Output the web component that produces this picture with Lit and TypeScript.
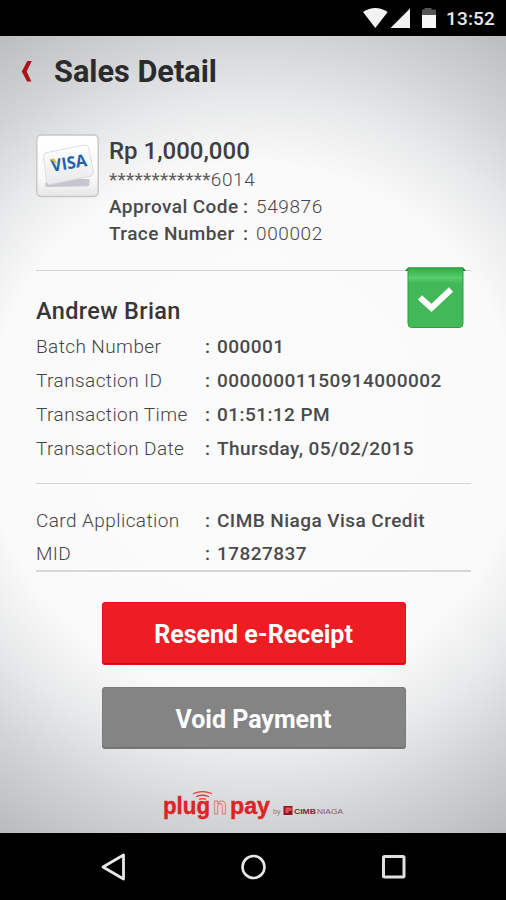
import { LitElement, html, css } from "lit";
import { customElement } from "lit/decorators.js";

const sale = [
  ["Batch Number", "000001"],
  ["Transaction ID", "00000001150914000002"],
  ["Transaction Time", "01:51:12 PM"],
  ["Transaction Date", "Thursday, 05/02/2015"],
];
const card = [
  ["Card Application", "CIMB Niaga Visa Credit"],
  ["MID", "17827837"],
];

@customElement("app-root")
export class AppRoot extends LitElement {
  static styles = css`
    :host {
      display: flex;
      flex-direction: column;
      box-sizing: border-box;
      width: 506px;
      height: 900px;
      overflow: hidden;
      font-family: Roboto, "Liberation Sans", sans-serif;
      color: #48484a;
    }
    svg { display: block; flex: none; }
    .status {
      height: 36px;
      background: #000;
      display: flex;
      align-items: center;
      justify-content: flex-end;
      padding-right: 11px;
      box-sizing: border-box;
      color: #e9e9e9;
    }
    .clock { font-size: 19px; line-height: 36px; font-weight: 500; letter-spacing: 0.15px; margin-left: 9px; padding-top: 2px; }
    .page {
      height: 797px;
      box-sizing: border-box;
      display: flex;
      flex-direction: column;
      background: radial-gradient(circle at 253px 394px, #fbfbfb 0, #fafafa 265px, #e8e9ea 330px, #d2d3d5 395px, #b8b9bb 480px);
    }
    .head { display: flex; align-items: center; height: 72px; padding-left: 21px; box-sizing: border-box; }
    h1 { margin: 0 0 0 21px; font-size: 30.7px; font-weight: 700; letter-spacing: 0; line-height: 36px; color: #2a2b2d; }
    .hero { display: flex; padding: 26px 0 0 36px; height: 136px; gap: 10px; }
    .summary { display: flex; flex-direction: column; font-size: 19px; color: #5c5c5e; }
    .amount { font-size: 24px; font-weight: 500; line-height: 34px; height: 33px; color: #3e3e40; }
    .masked { line-height: 26px; font-weight: 400; letter-spacing: 0.3px; }
    .code { line-height: 27px; display: flex; }
    .key { font-weight: 500; width: 134px; letter-spacing: 0.42px; color: #4a4a4c; white-space: pre; }
    .colon { font-weight: 500; width: 13px; color: #4a4a4c; }
    .light { font-weight: 300; letter-spacing: 0.6px; color: #48484a; }
    .section { margin: 0 35px 0 36px; border-top: 1px solid #d2d3d4; position: relative; display: flex; flex-direction: column; box-sizing: border-box; }
    .person { height: 213px; padding-top: 23px; }
    .cards { height: 89px; padding-top: 20px; border-bottom: 2px solid #d6d7d8; }
    .name { font-size: 23.5px; font-weight: 500; line-height: 34px; letter-spacing: 0.35px; color: #363638; height: 36px; }
    .row { display: flex; height: 33.8px; align-items: center; font-size: 19px; white-space: nowrap; }
    .label { width: 169px; font-weight: 300; letter-spacing: 0.42px; color: #444446; }
    .sep { width: 12px; font-weight: 500; }
    .value { font-weight: 500; letter-spacing: 0.44px; color: #4a4a4c; }
    .ribbon { position: absolute; right: 4px; top: -5px; }
    .actions { display: flex; flex-direction: column; align-items: center; gap: 22px; padding: 30px 0 0 1px; }
    button {
      width: 304px; height: 62.5px; border: 0; border-radius: 4px; font: 700 25px/60px Roboto, sans-serif;
      color: #fff; background: #ee1c23; box-shadow: inset 0 0 0 1px #e5131a, inset 0 -2px 0 #c70e14; padding: 3px 0 0;
    }
    .void { background: #848484; box-shadow: inset 0 0 0 1px #7a7a7a, inset 0 -2px 0 #707070; }
    .brand { display: flex; padding: 40px 0 0 160px; }
    .nav { height: 67px; background: #000; display: flex; align-items: center; justify-content: center; gap: 112px; }
    .logo-text { font-family: "Liberation Sans", sans-serif; }
  `;

  private rows(items: string[][]) {
    return items.map(
      ([k, v]) => html`<div class="row"><span class="label">${k}</span><span class="sep">:</span><span class="value">${v}</span></div>`
    );
  }

  render() {
    return html`
      <div class="status">
        <svg width="85" height="36" viewBox="0 0 85 36">
          <path d="M11 12 Q23.300 4 35.700 12 L23.300 28Z" fill="#f2f2f2" />
          <path d="M58 8.500V28H38.500Z" fill="#f2f2f2" />
          <path d="M72.500 8h7v1.500h4.500v5.500H70V9.500h2.500z" fill="#555" />
          <path d="M70 15h14v13H70z" fill="#f6f6f6" />
        </svg>
        <span class="clock">13:52</span>
      </div>
      <main class="page">
        <header class="head">
          <svg width="12" height="24" viewBox="0 0 12 24"><path d="M6.300 1H10.800L5.700 11.500L10.400 21.500H6L0.800 11.500Z" fill="#ab1319" /></svg>
          <h1>Sales Detail</h1>
        </header>
        <div class="hero">
          <svg width="63" height="64" viewBox="0 0 63 64">
            <defs><linearGradient id="tile" x2="0" y2="1"><stop stop-color="#fff" /><stop offset=".7" stop-color="#f9f9f9" /><stop offset="1" stop-color="#e6e6e7" /></linearGradient>
            <linearGradient id="front" x2="0" y2="1"><stop stop-color="#fff" /><stop offset="1" stop-color="#e9e9ec" /></linearGradient></defs>
            <rect x=".8" y="1" width="61.400" height="61.500" rx="4.500" fill="url(#tile)" stroke="#c6c6c8" stroke-width="1.400" />
            <path d="M14 45H53.500V50Q53.500 52 51 52.200L12 53Q9 53 9 49.500Z" fill="#c5c6ce" />
            <path d="M11 18.500L48.500 11Q52 10.500 52.800 14L57.500 38Q58 41.500 54.500 42.300L14.500 50.500Q11 51 10.500 47.500L7.500 22.500Q7.300 19.300 11 18.500Z" fill="url(#front)" stroke="#d6d6da" stroke-width=".8" />
            <g transform="rotate(-9 33 30)">
              <text x="15" y="35" font-family="Open Sans, sans-serif" font-size="17" font-weight="700" textLength="36" lengthAdjust="spacingAndGlyphs" fill="#1f64ab">VISA</text>
              <path d="M14.500 22.300h4.600l2.500 6z" fill="#eeb43c" />
            </g>
          </svg>
          <div class="summary">
            <div class="amount">Rp 1,000,000</div>
            <div class="masked">************<span class="light">6014</span></div>
            <div class="code"><span class="key">Approval Code</span><span class="colon">:</span><span class="light">549876</span></div>
            <div class="code"><span class="key">Trace Number</span><span class="colon">:</span><span class="light">000002</span></div>
          </div>
        </div>
        <section class="section person">
          <div class="name">Andrew Brian</div>
          ${this.rows(sale)}
          <svg class="ribbon" width="63" height="64" viewBox="0 0 63 64">
            <defs><linearGradient id="rib" x2="0" y2="1"><stop stop-color="#35ad4b" /><stop offset=".08" stop-color="#43bb58" /><stop offset=".16" stop-color="#5ccd70" /><stop offset=".26" stop-color="#42b858" /><stop offset="1" stop-color="#42b858" /></linearGradient></defs>
            <path d="M1 5L4 1.500H59L62 5Z" fill="#157a2b" />
            <path d="M4 2H59V57.500Q59 61.500 55.500 61.500H7.500Q4 61.500 4 57.500Z" fill="url(#rib)" stroke="#2ba043" />
            <path d="M16 31.500L27.500 42L47 23.500" fill="none" stroke="#fff" stroke-width="6" />
          </svg>
        </section>
        <section class="section cards">${this.rows(card)}</section>
        <div class="actions"><button>Resend e-Receipt</button><button class="void">Void Payment</button></div>
        <div class="brand">
          <svg class="logo-text" width="190" height="36" viewBox="0 0 190 36">
            <g fill="#dc2427" font-size="23" font-weight="700">
              <text x="3" y="24.500" textLength="47" lengthAdjust="spacingAndGlyphs" stroke="#dc2427" stroke-width=".4">plug</text>
              <text x="53" y="24.500" textLength="14" lengthAdjust="spacingAndGlyphs" fill="none" stroke="#e07678" stroke-width=".9">n</text>
              <text x="70" y="24.500" textLength="40" lengthAdjust="spacingAndGlyphs" stroke="#dc2427" stroke-width=".4">pay</text>
            </g>
            <path d="M33.500 4.500Q42.500 0.800 51.500 4.500M36.500 7.500Q42.500 5 48.500 7.500M39.500 10.200Q42.500 9 45.500 10.200" fill="none" stroke="#dc3c3e" stroke-width="1.300" stroke-linecap="round" />
            <text x="113" y="25" font-size="7" fill="#927070">by</text>
            <rect x="123.500" y="17" width="9" height="9" fill="#8a1720" /><path d="M125.500 18.500h6v3.500h-3v2h-3z" fill="#e65055" />
            <text x="134" y="25.300" font-size="8" font-weight="700" fill="#722b39" textLength="22" lengthAdjust="spacingAndGlyphs">CIMB</text>
            <text x="157" y="25.300" font-size="8" fill="#8c5862" textLength="26" lengthAdjust="spacingAndGlyphs">NIAGA</text>
          </svg>
        </div>
      </main>
      <nav class="nav">
        <svg width="28" height="30" viewBox="0 0 28 30"><path d="M24.500 3V27L4 15Z" fill="none" stroke="#e8e8e8" stroke-width="2.800" stroke-linejoin="round" /></svg>
        <svg width="28" height="30" viewBox="0 0 28 30"><circle cx="14.500" cy="15" r="11" fill="none" stroke="#e8e8e8" stroke-width="2.600" /></svg>
        <svg width="28" height="30" viewBox="0 0 28 30"><rect x="4.500" y="4.500" width="20.500" height="20.500" rx="1" fill="none" stroke="#e0e0e0" stroke-width="3" /></svg>
      </nav>
    `;
  }
}
